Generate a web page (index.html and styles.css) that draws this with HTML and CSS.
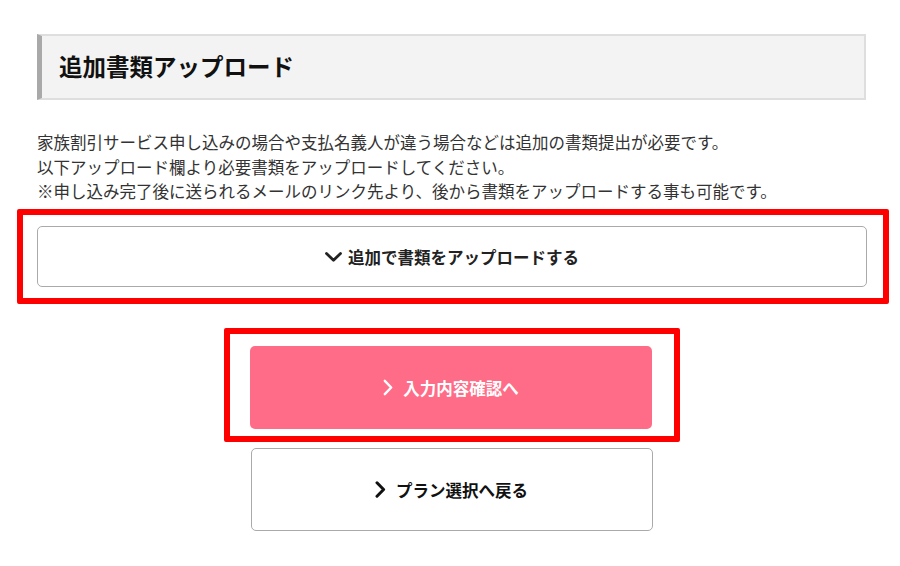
FILE: index.html
```html
<!DOCTYPE html>
<html lang="ja">
<head>
<meta charset="utf-8">
<title>追加書類アップロード</title>
<link rel="stylesheet" href="styles.css">
</head>
<body>
<div class="page">
  <h2 class="section-title">追加書類アップロード</h2>
  <p class="note">家族割引サービス申し込みの場合や支払名義人が違う場合などは追加の書類提出が必要です。<br>以下アップロード欄より必要書類をアップロードしてください。<br>※申し込み完了後に送られるメールのリンク先より、後から書類をアップロードする事も可能です。</p>
  <div class="mark mark-wide">
    <button class="toggle" type="button">
      <svg class="icon-down" width="17" height="10" viewBox="0 0 17 10"><polyline points="1.5,1.5 8.5,8.3 15.5,1.5" fill="none" stroke="#222" stroke-width="2.8" stroke-linecap="round" stroke-linejoin="round"/></svg>
      <span>追加で書類をアップロードする</span>
    </button>
  </div>
  <div class="actions">
    <div class="mark mark-narrow">
      <a class="btn btn-primary" href="#">
        <svg class="icon-right" width="10" height="17" viewBox="0 0 10 17"><polyline points="1.8,1.8 8.2,8.5 1.8,15.2" fill="none" stroke="#fff" stroke-width="2.4" stroke-linecap="round" stroke-linejoin="round"/></svg>
        <span>入力内容確認へ</span>
      </a>
    </div>
    <a class="btn btn-secondary" href="#">
      <svg class="icon-right" width="11" height="17" viewBox="0 0 11 17"><polyline points="2,1.8 8.6,8.5 2,15.2" fill="none" stroke="#111" stroke-width="3" stroke-linecap="round" stroke-linejoin="round"/></svg>
      <span>プラン選択へ戻る</span>
    </a>
  </div>
</div>
</body>
</html>
```

FILE: styles.css
```css
* { box-sizing: border-box; }

body {
  margin: 0;
  background: #fff;
  font-family: "Noto Sans CJK JP", "Noto Sans", sans-serif;
  color: #333;
}

.page {
  width: 829px;
  margin-left: 37px;
  padding-top: 34px;
}

.section-title {
  margin: 0;
  height: 66px;
  display: flex;
  align-items: center;
  padding-left: 17px;
  background: #f3f3f3;
  border: 2px solid #dedede;
  border-left: 5px solid #a9a9a9;
  font-size: 23.5px;
  font-weight: 700;
  color: #111;
  line-height: 1;
}

.note {
  margin: 30px 0 0;
  font-size: 16.5px;
  line-height: 24.5px;
  color: #333;
  white-space: nowrap;
}

.mark {
  border: 6px solid #ff0000;
  border-radius: 2px;
}

.mark-wide {
  margin: 5.5px -23px 0 -20px;
  padding: 11px 16px 11px 14px;
}

.toggle {
  width: 830px;
  height: 61px;
  display: flex;
  align-items: center;
  justify-content: center;
  gap: 6px;
  background: #fff;
  border: 1px solid #aaa;
  border-radius: 5px;
  font-family: inherit;
  font-size: 16.5px;
  font-weight: 700;
  color: #222;
  cursor: pointer;
  padding: 0;
}

.icon-down { margin-top: 1px; }

.actions {
  display: flex;
  flex-direction: column;
  align-items: center;
  margin-top: 24px;
}

.mark-narrow {
  width: 456px;
  padding: 12px 22px 7px 20px;
  margin-left: 1px;
}

.btn {
  width: 402px;
  height: 83px;
  display: flex;
  align-items: center;
  justify-content: center;
  border-radius: 5px;
  font-size: 16.5px;
  font-weight: 700;
  text-decoration: none;
}

.btn-primary {
  background: #ff6c87;
  color: #fff;
  gap: 10px;
}

.btn-secondary {
  margin-top: 6px;
  background: #fff;
  border: 1px solid #aaa;
  color: #111;
  gap: 10px;
}
```
